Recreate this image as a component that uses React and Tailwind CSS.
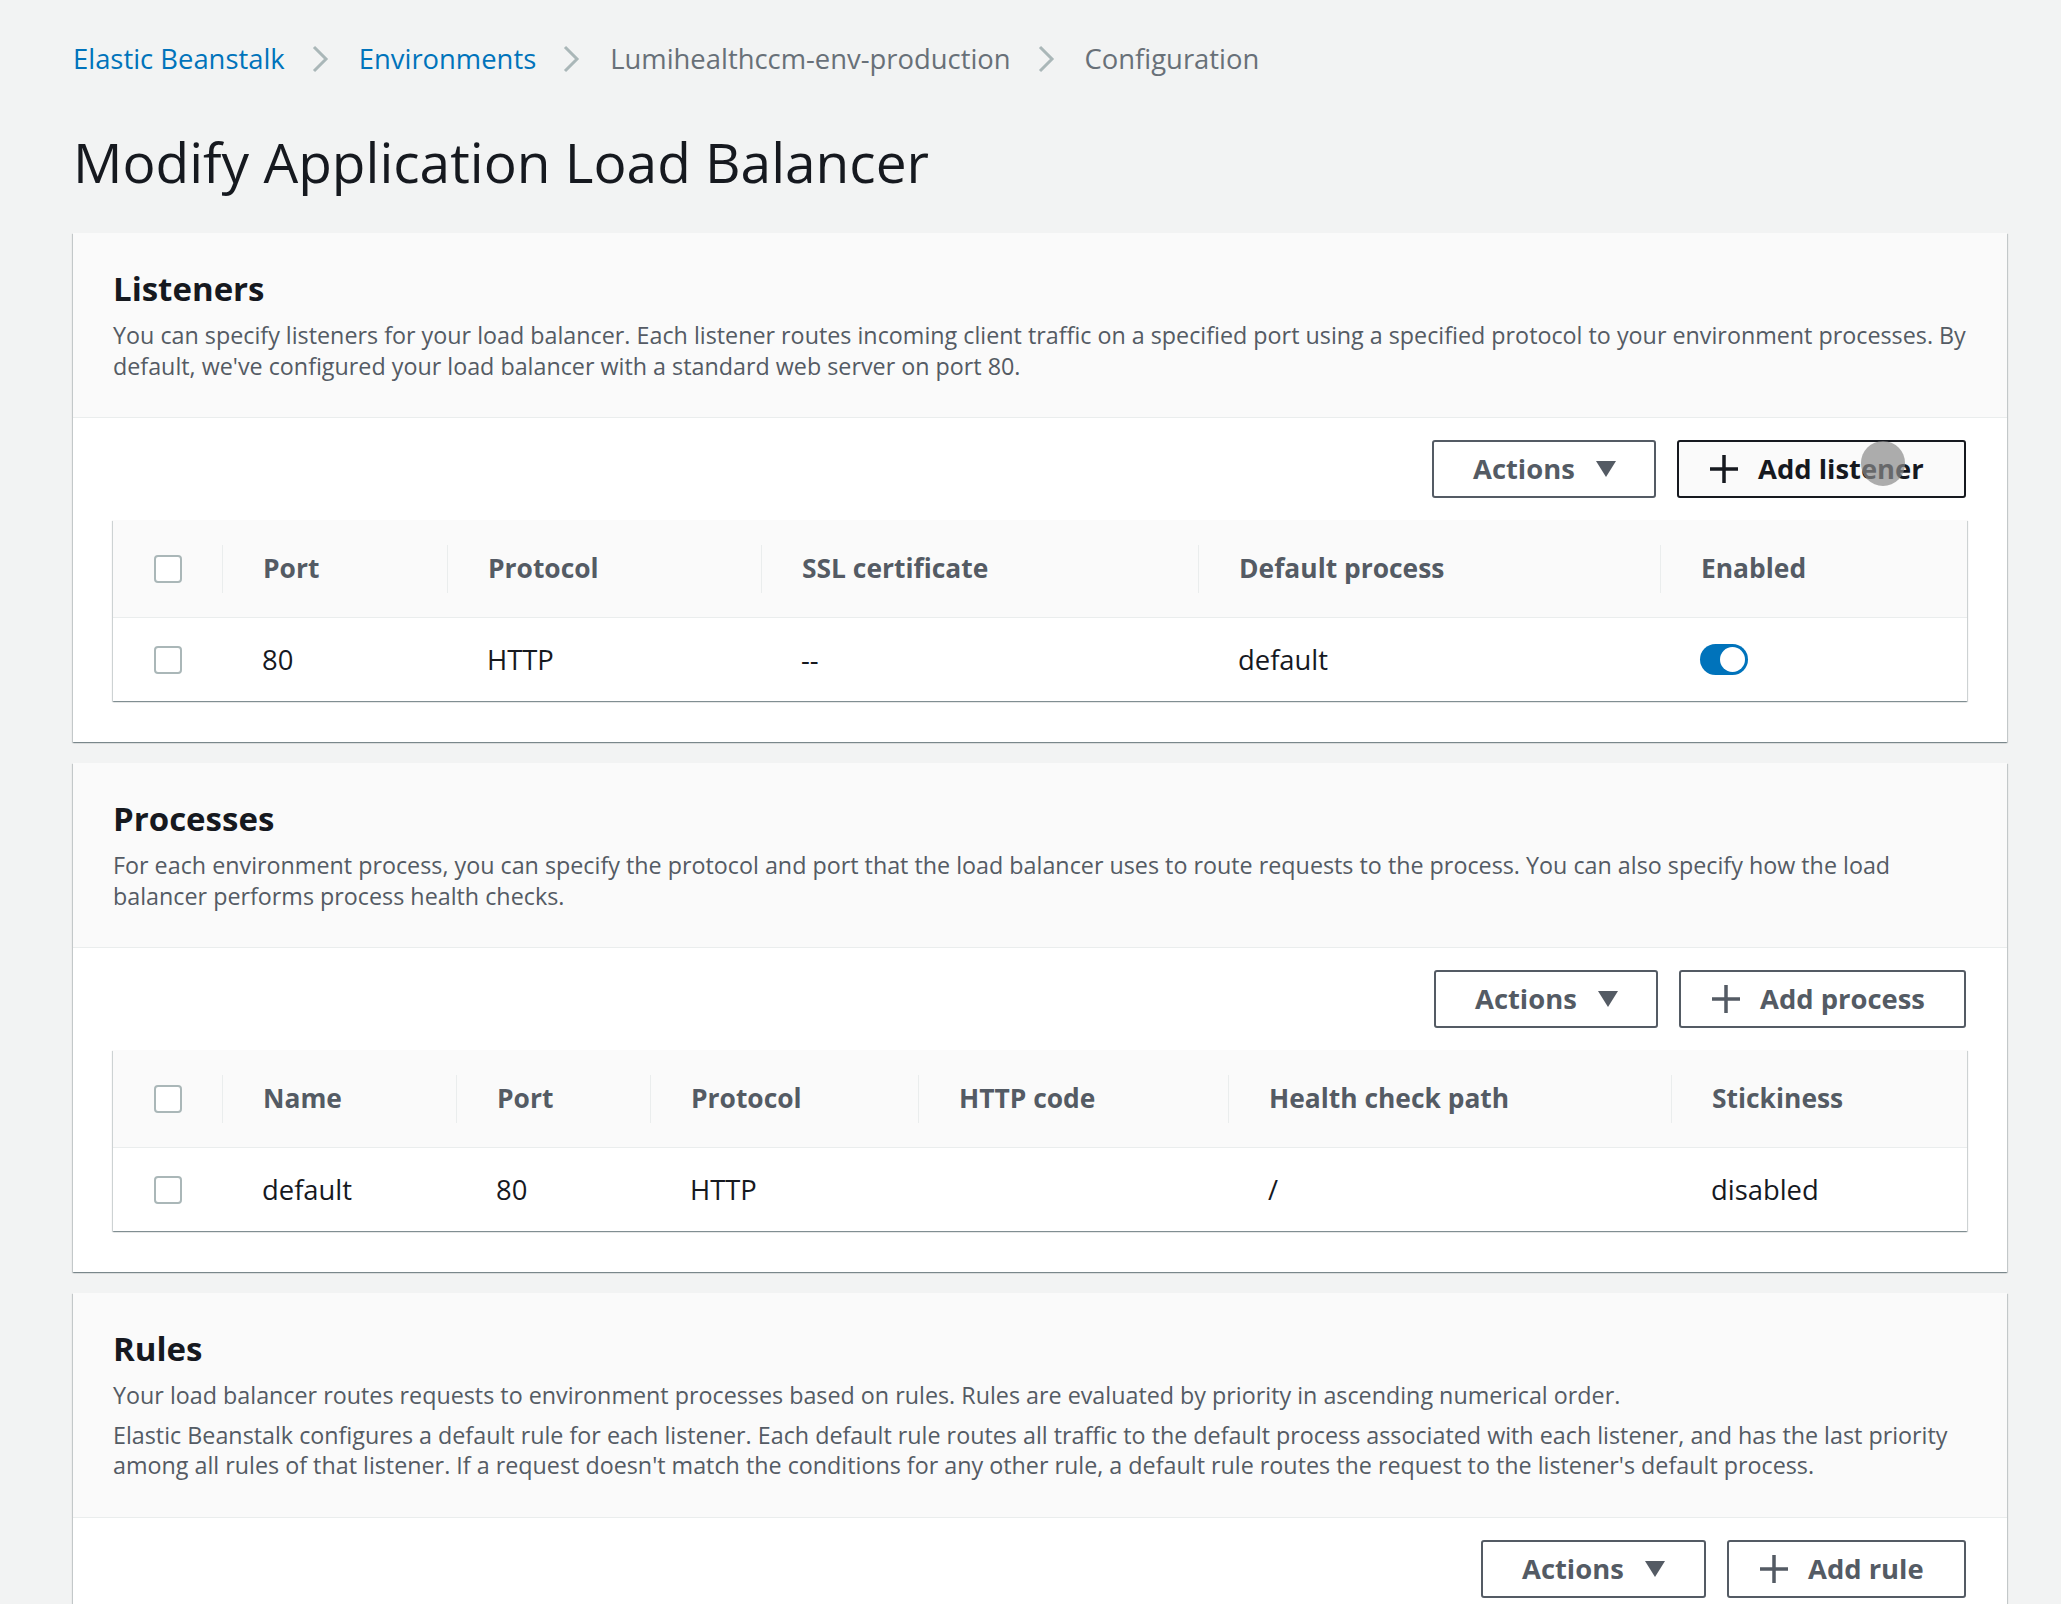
import React from 'react';

const listenerCols = 'grid grid-cols-[109px_225px_314px_437px_462px_1fr]';
const processCols = 'grid grid-cols-[109px_234px_194px_268px_310px_443px_1fr]';

function Chevron() {
  return (
    <svg width="18" height="28" viewBox="0 0 18 28" className="shrink-0">
      <path d="M3 2 L15 14 L3 26" fill="none" stroke="#aab7b8" strokeWidth="3" />
    </svg>
  );
}

function Checkbox() {
  return <div className="w-[28px] h-[28px] rounded-[4px] border-2 border-[#aab7b8] bg-white" />;
}

function Toggle() {
  return (
    <div className="w-[48px] h-[31px] rounded-full bg-[#0073bb] flex items-center justify-end pr-[3px]">
      <div className="w-[25px] h-[25px] rounded-full bg-white" />
    </div>
  );
}

function Triangle() {
  return (
    <svg width="20" height="16" viewBox="0 0 20 16">
      <path d="M0 0 L20 0 L10 16 Z" fill="#545b64" />
    </svg>
  );
}

function Plus({ color }) {
  return (
    <svg width="28" height="28" viewBox="0 0 28 28">
      <path d="M14 0 V28 M0 14 H28" stroke={color} strokeWidth="3.5" />
    </svg>
  );
}

function Toolbar({ actionsWidth, addLabel, addWidth, focused }) {
  const addClass = focused
    ? 'border-[#16191f] text-[#16191f] bg-[#fafafa]'
    : 'border-[#545b64] text-[#545b64] bg-white';
  return (
    <div className="flex justify-end gap-[21px] pr-[1px]">
      <button
        className={`${actionsWidth} h-[58px] rounded-[3px] border-2 border-[#545b64] bg-white text-[#545b64] font-bold text-[27.4px] flex items-center pl-[39px] gap-[21px]`}
      >
        <span>Actions</span>
        <Triangle />
      </button>
      <button
        className={`relative ${addWidth} h-[58px] rounded-[3px] border-2 ${addClass} font-bold text-[27.4px] flex items-center pl-[31px] gap-[20px]`}
      >
        <Plus color={focused ? '#16191f' : '#545b64'} />
        <span>{addLabel}</span>
        {focused && (
          <span className="absolute left-[182px] top-[-1px] w-[44px] h-[45px] rounded-full bg-[#8a8a8a]/70" />
        )}
      </button>
    </div>
  );
}

function HeadCell({ children }) {
  return (
    <div className="flex items-center">
      <div className="w-px h-[48px] bg-[#eaeded]" />
      <div className="pl-[40px] text-[26.4px] font-bold text-[#545b64]">{children}</div>
    </div>
  );
}

function BodyCell({ children }) {
  return <div className="flex items-center pl-[40px] text-[27.4px] text-[#16191f]">{children}</div>;
}

function Table({ cols, headers, cells }) {
  return (
    <div className="mt-[22px] bg-white shadow-[0_1px_1px_0_rgba(0,28,36,0.3),1px_1px_1px_0_rgba(0,28,36,0.15),-1px_1px_1px_0_rgba(0,28,36,0.15)]">
      <div className={`${cols} h-[98px] bg-[#fafafa] border-b border-[#eaeded]`}>
        <div className="flex items-center justify-center">
          <Checkbox />
        </div>
        {headers.map((h) => (
          <HeadCell key={h}>{h}</HeadCell>
        ))}
      </div>
      <div className={`${cols} h-[83px]`}>
        <div className="flex items-center justify-center">
          <Checkbox />
        </div>
        {cells.map((c, i) => (
          <BodyCell key={i}>{c}</BodyCell>
        ))}
      </div>
    </div>
  );
}

function Panel({ title, children, toolbar, table }) {
  return (
    <section className="bg-white shadow-[0_1px_1px_0_rgba(0,28,36,0.3),1px_1px_1px_0_rgba(0,28,36,0.15),-1px_1px_1px_0_rgba(0,28,36,0.15)]">
      <div className="bg-[#fafafa] border-b border-[#eaeded] px-[40px] pt-[36px] pb-[36px]">
        <h2 className="text-[33px] leading-[40px] font-bold text-[#16191f]">{title}</h2>
        <div className="mt-[11px] text-[23.3px] leading-[30.5px] text-[#545b64]">{children}</div>
      </div>
      <div className="px-[40px] pt-[22px] pb-[41px]">
        {toolbar}
        {table}
      </div>
    </section>
  );
}

function Crumb({ children, link }) {
  return <span className={link ? 'text-[#0073bb]' : 'text-[#687078]'}>{children}</span>;
}

function Sep() {
  return (
    <span className="ml-[26px] mr-[30px] flex">
      <Chevron />
    </span>
  );
}

export default function App() {
  return (
    <div className="min-h-screen bg-[#f2f3f3] font-['Open_Sans','Liberation_Sans',sans-serif]">
      <div className="ml-[73px] w-[1934px] pt-[41px]">
        <nav className="flex items-center h-[36px] text-[27.4px]">
          <Crumb link>Elastic Beanstalk</Crumb>
          <Sep />
          <Crumb link>Environments</Crumb>
          <Sep />
          <Crumb>Lumihealthccm-env-production</Crumb>
          <Sep />
          <Crumb>Configuration</Crumb>
        </nav>

        <h1 className="mt-[53px] text-[55px] leading-[64px] text-[#16191f]">Modify Application Load Balancer</h1>

        <div className="mt-[39px] flex flex-col gap-[21px]">
          <Panel
            title="Listeners"
            toolbar={<Toolbar actionsWidth="w-[224px]" addLabel="Add listener" addWidth="w-[289px]" focused />}
            table={
              <Table
                cols={listenerCols}
                headers={['Port', 'Protocol', 'SSL certificate', 'Default process', 'Enabled']}
                cells={['80', 'HTTP', '--', 'default', <Toggle key="t" />]}
              />
            }
          >
            <p>
              You can specify listeners for your load balancer. Each listener routes incoming client traffic on a specified port using a specified protocol to your environment processes. By
              <br />
              default, we've configured your load balancer with a standard web server on port 80.
            </p>
          </Panel>

          <Panel
            title="Processes"
            toolbar={<Toolbar actionsWidth="w-[224px]" addLabel="Add process" addWidth="w-[287px]" />}
            table={
              <Table
                cols={processCols}
                headers={['Name', 'Port', 'Protocol', 'HTTP code', 'Health check path', 'Stickiness']}
                cells={['default', '80', 'HTTP', '', '/', 'disabled']}
              />
            }
          >
            <p>
              For each environment process, you can specify the protocol and port that the load balancer uses to route requests to the process. You can also specify how the load
              <br />
              balancer performs process health checks.
            </p>
          </Panel>

          <Panel
            title="Rules"
            toolbar={<Toolbar actionsWidth="w-[225px]" addLabel="Add rule" addWidth="w-[239px]" />}
          >
            <p>Your load balancer routes requests to environment processes based on rules. Rules are evaluated by priority in ascending numerical order.</p>
            <p className="mt-[9px]">
              Elastic Beanstalk configures a default rule for each listener. Each default rule routes all traffic to the default process associated with each listener, and has the last priority
              <br />
              among all rules of that listener. If a request doesn't match the conditions for any other rule, a default rule routes the request to the listener's default process.
            </p>
          </Panel>
        </div>
      </div>
    </div>
  );
}
